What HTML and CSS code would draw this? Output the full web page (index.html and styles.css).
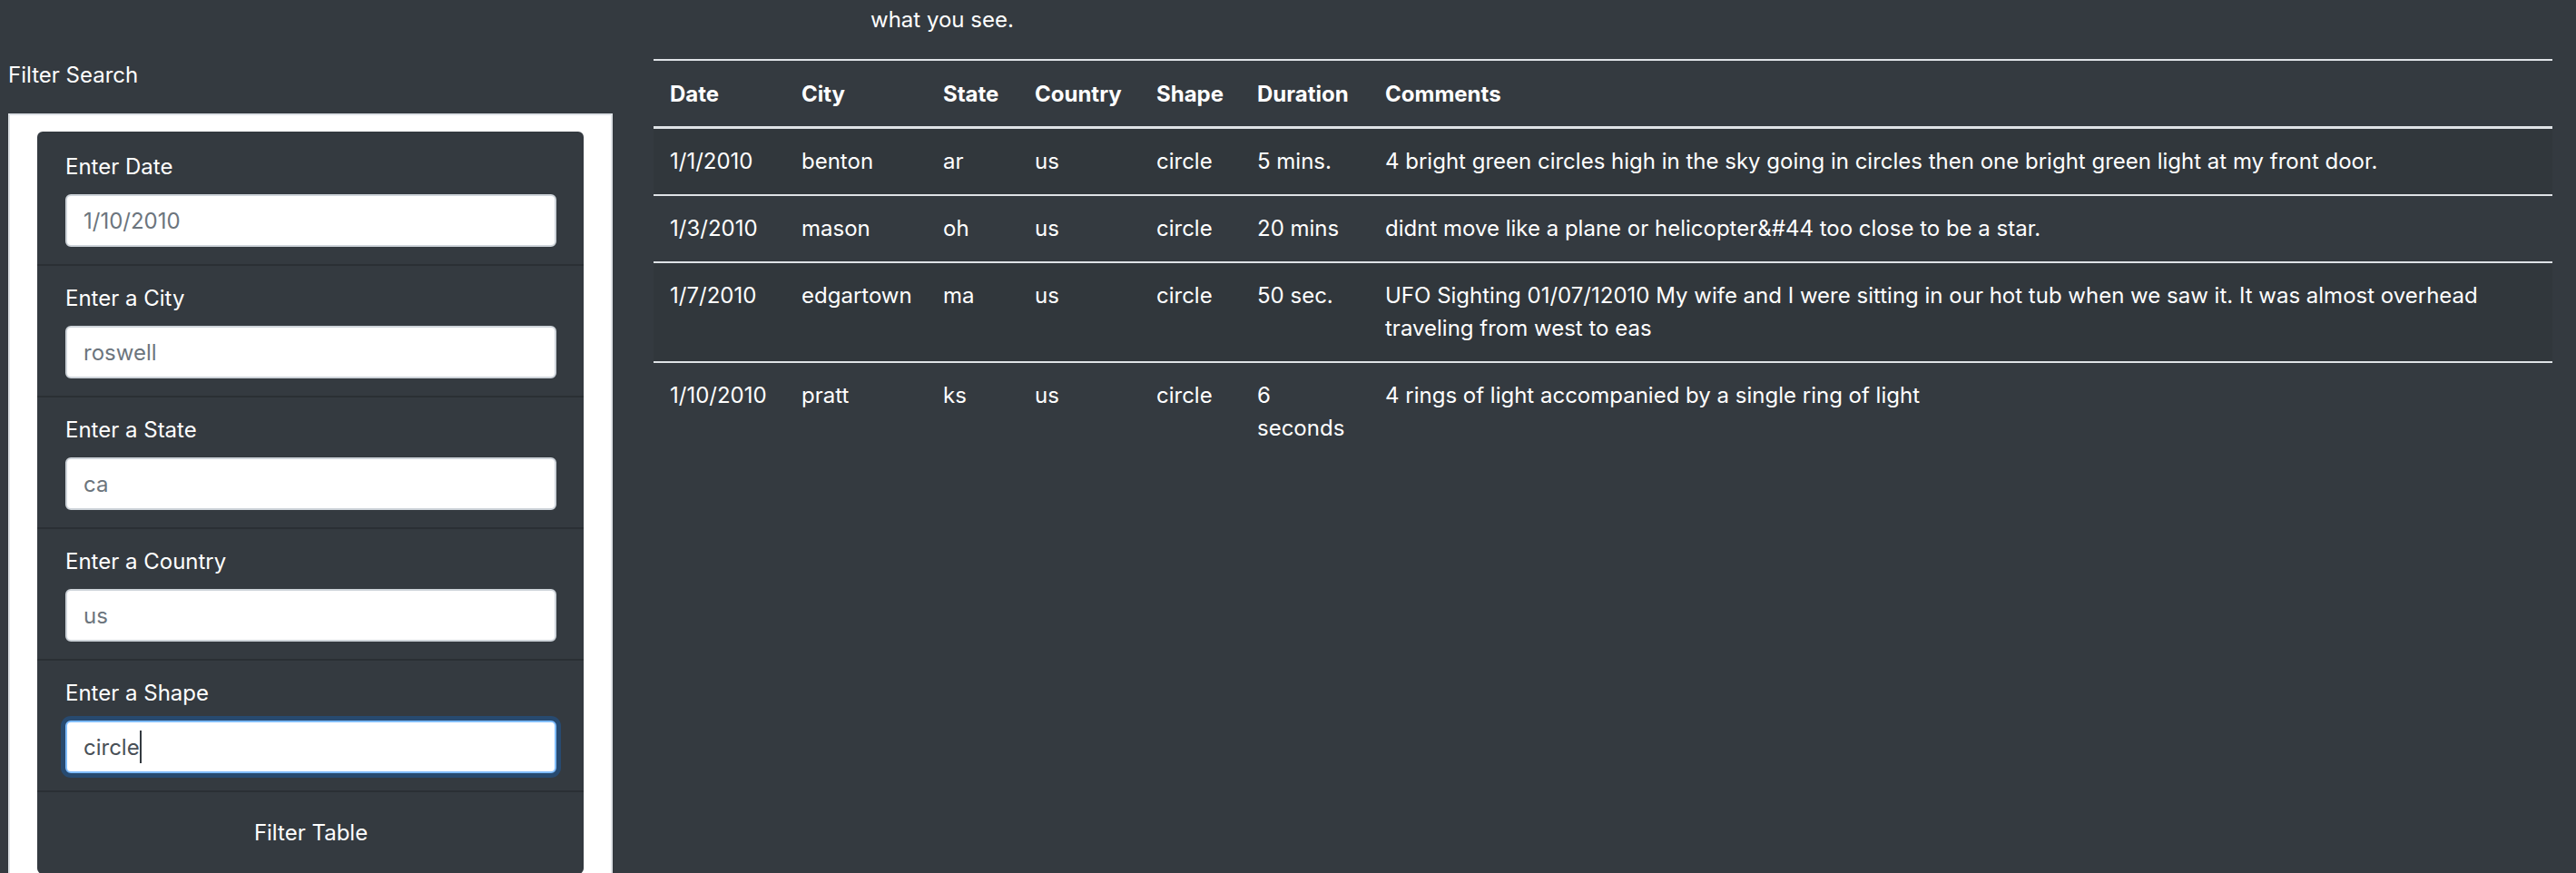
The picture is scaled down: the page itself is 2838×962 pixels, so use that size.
FILE: index.html
```html
<!DOCTYPE html>
<html lang="en">
<head>
<meta charset="utf-8">
<title>UFO Sightings</title>
<link rel="stylesheet" href="styles.css">
</head>
<body>
<div class="page">
  <aside class="sidebar">
    <h4 class="filter-title">Filter Search</h4>
    <div class="well">
      <form class="filter-card">
        <ul class="filter-list">
          <li class="filter-item">
            <label class="filter-label" for="datetime">Enter Date</label>
            <input class="filter-input" id="datetime" type="text" placeholder="1/10/2010">
          </li>
          <li class="filter-item">
            <label class="filter-label" for="city">Enter a City</label>
            <input class="filter-input" id="city" type="text" placeholder="roswell">
          </li>
          <li class="filter-item">
            <label class="filter-label" for="state">Enter a State</label>
            <input class="filter-input" id="state" type="text" placeholder="ca">
          </li>
          <li class="filter-item">
            <label class="filter-label" for="country">Enter a Country</label>
            <input class="filter-input" id="country" type="text" placeholder="us">
          </li>
          <li class="filter-item">
            <label class="filter-label" for="shape">Enter a Shape</label>
            <div class="input-wrap">
              <input class="filter-input is-focused" id="shape" type="text" value="circle">
              <span class="caret-mirror" aria-hidden="true">circle</span>
            </div>
          </li>
          <li class="filter-item filter-submit">
            <button class="filter-btn" type="button">Filter Table</button>
          </li>
        </ul>
      </form>
    </div>
  </aside>
  <main class="content">
    <p class="intro-tail">what you see.</p>
    <table class="sightings">
      <thead>
        <tr>
          <th class="c-date">Date</th>
          <th class="c-city">City</th>
          <th class="c-state">State</th>
          <th class="c-country">Country</th>
          <th class="c-shape">Shape</th>
          <th class="c-duration">Duration</th>
          <th class="c-comments">Comments</th>
        </tr>
      </thead>
      <tbody>
        <tr>
          <td>1/1/2010</td><td>benton</td><td>ar</td><td>us</td><td>circle</td><td>5 mins.</td>
          <td>4 bright green circles high in the sky going in circles then one bright green light at my front door.</td>
        </tr>
        <tr>
          <td>1/3/2010</td><td>mason</td><td>oh</td><td>us</td><td>circle</td><td>20 mins</td>
          <td>didnt move like a plane or helicopter&amp;#44 too close to be a star.</td>
        </tr>
        <tr>
          <td>1/7/2010</td><td>edgartown</td><td>ma</td><td>us</td><td>circle</td><td>50 sec.</td>
          <td>UFO Sighting 01/07/12010 My wife and I were sitting in our hot tub when we saw it. It was almost overhead traveling from west to eas</td>
        </tr>
        <tr>
          <td>1/10/2010</td><td>pratt</td><td>ks</td><td>us</td><td>circle</td><td>6 seconds</td>
          <td>4 rings of light accompanied by a single ring of light</td>
        </tr>
      </tbody>
    </table>
  </main>
</div>
</body>
</html>
```
FILE: styles.css
```css
* { box-sizing: border-box; }

html, body {
  margin: 0;
  padding: 0;
}

body {
  background: #343a40;
  color: #ffffff;
  font-family: "Inter", "Liberation Sans", sans-serif;
  font-size: 24px;
  line-height: 36px;
  height: 962px;
  overflow: hidden;
}

.page {
  display: flex;
  align-items: flex-start;
  padding-left: 9px;
  padding-right: 26px;
}

/* ---------- sidebar ---------- */
.sidebar {
  width: 666px;
  flex: none;
  padding-top: 65px;
}

.filter-title {
  margin: 0 0 24px 0;
  font-size: 24px;
  font-weight: 400;
  line-height: 36px;
}

.well {
  background: #ffffff;
  border: 2px solid #dee2e6;
  border-bottom: none;
  padding: 18px 30px 60px 30px;
}

.filter-card {
  margin: 0;
  background: #343a40;
  border-radius: 6px;
  overflow: hidden;
}

.filter-list {
  list-style: none;
  margin: 0;
  padding: 0;
}

.filter-item {
  padding: 18px 30px 19px 31px;
  border-bottom: 2px solid #2a2f34;
  display: flex;
  flex-direction: column;
}

.filter-item:first-child {
  padding-top: 21px;
}

.filter-label {
  display: block;
  margin-bottom: 12px;
  line-height: 36px;
}

.input-wrap {
  position: relative;
}

.filter-input {
  display: block;
  width: 100%;
  height: 58px;
  padding: 9px 18px;
  font-family: inherit;
  font-size: 24px;
  line-height: 36px;
  color: #495057;
  background: #ffffff;
  border: 2px solid #ced4da;
  border-radius: 6px;
  outline: none;
}

.filter-input::placeholder {
  color: #6c757d;
  opacity: 1;
}

.filter-input.is-focused {
  border-color: #80bdff;
  box-shadow: 0 0 0 5px rgba(0, 123, 255, 0.25);
}

.caret-mirror {
  position: absolute;
  left: 20px;
  top: 11px;
  line-height: 36px;
  font-size: 24px;
  color: transparent;
  border-right: 2px solid #343a40;
  pointer-events: none;
}

.filter-submit {
  border-bottom: none;
  padding-bottom: 18px;
}

.filter-btn {
  display: block;
  width: 100%;
  padding: 9px 18px;
  font-family: inherit;
  font-size: 24px;
  line-height: 36px;
  color: #ffffff;
  background: transparent;
  border: none;
  text-align: center;
}

/* ---------- content ---------- */
.content {
  flex: 1;
  margin-left: 45px;
  padding-top: 4px;
}

.intro-tail {
  margin: 0 0 25px 0;
  padding-left: 239px;
}

.sightings {
  width: 100%;
  border-collapse: collapse;
  table-layout: fixed;
  color: #ffffff;
}

.sightings th,
.sightings td {
  padding: 18px;
  text-align: left;
  vertical-align: top;
  border-top: 2px solid #dee2e6;
}

.sightings th {
  font-weight: 700;
  padding-top: 19px;
  padding-bottom: 17px;
  border-bottom: 3px solid #dee2e6;
}

.sightings tbody tr:first-child td {
  border-top: none;
}

.sightings tbody tr:nth-child(odd) {
  background: rgba(0, 0, 0, 0.05);
}

.c-date { width: 145px; }
.c-city { width: 156px; }
.c-state { width: 101px; }
.c-country { width: 134px; }
.c-shape { width: 111px; }
.c-duration { width: 141px; }
.c-comments { width: auto; }
```
